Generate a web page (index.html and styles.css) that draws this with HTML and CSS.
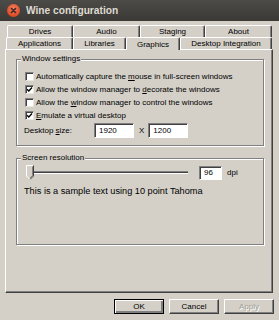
FILE: index.html
```html
<!DOCTYPE html>
<html lang="en">
<head>
    <meta charset="UTF-8">
    <title>Wine configuration</title>
    <link rel="stylesheet" href="styles.css">
</head>
<body>
    <div class="titlebar">
        <span class="close-button">
            <svg width="13" height="13" viewBox="0 0 13 13">
                <path d="M4.5 4.5 L8.5 8.5 M8.5 4.5 L4.5 8.5" stroke="#3c2a24" stroke-width="1.6" stroke-linecap="round"/>
            </svg>
        </span>
        <span class="title">Wine configuration</span>
    </div>

    <div class="frame">
        <!-- Tabs -->
        <div class="tab-row back-row">
            <div class="tab w-66">Drives</div>
            <div class="tab w-67">Audio</div>
            <div class="tab w-65">Staging</div>
            <div class="tab w-67">About</div>
        </div>
        <div class="tab-row front-row">
            <div class="tab w-67">Applications</div>
            <div class="tab w-53">Libraries</div>
            <div class="tab w-54 selected">Graphics</div>
            <div class="tab w-92">Desktop Integration</div>
        </div>

        <!-- Graphics page -->
        <div class="panel">
            <div class="group window-group">
                <div class="group-title">Window settings</div>
                <div class="check-row first">
                    <span class="checkbox"></span>
                    <span>Automatically capture the <u>m</u>ouse in full-screen windows</span>
                </div>
                <div class="check-row">
                    <span class="checkbox checked"></span>
                    <span>Allow the window manager to <u>d</u>ecorate the windows</span>
                </div>
                <div class="check-row">
                    <span class="checkbox"></span>
                    <span>Allow the <u>w</u>indow manager to control the windows</span>
                </div>
                <div class="check-row">
                    <span class="checkbox checked"></span>
                    <span><u>E</u>mulate a virtual desktop</span>
                </div>
                <div class="size-row">
                    <span class="size-label">Desktop <u>s</u>ize:</span>
                    <span class="field size-field">1920</span>
                    <span class="times">X</span>
                    <span class="field size-field">1200</span>
                </div>
            </div>

            <div class="group resolution-group">
                <div class="group-title">Screen resolution</div>
                <div class="slider-row">
                    <div class="slider">
                        <svg class="thumb" width="8" height="15" viewBox="0 0 8 15">
                            <polygon points="0.5,0.5 7.5,0.5 7.5,11 4,14.5 0.5,11" fill="#d4d0c8"/>
                            <polyline points="0.5,11 0.5,0.5 7,0.5" fill="none" stroke="#ffffff"/>
                            <polyline points="7.5,0.5 7.5,11 4,14.5" fill="none" stroke="#404040"/>
                            <polyline points="6.5,1.5 6.5,10.6 4,13" fill="none" stroke="#808080"/>
                            <line x1="0.5" y1="11" x2="4" y2="14.5" stroke="#ffffff"/>
                        </svg>
                    </div>
                    <span class="field dpi-field">96</span>
                    <span class="dpi">dpi</span>
                </div>
                <div class="sample">This is a sample text using 10 point Tahoma</div>
            </div>
        </div>

        <!-- Dialog buttons -->
        <div class="buttons">
            <button class="default">OK</button>
            <button>Cancel</button>
            <button disabled>Apply</button>
        </div>
    </div>
</body>
</html>
```

FILE: styles.css
```css
body {
    margin: 0;
    width: 279px;
    height: 320px;
    overflow: hidden;
    background-color: #d4d0c8;
    font-family: 'Liberation Sans', Arial, sans-serif;
    font-size: 8px;
    color: #000;
}
.titlebar {
    height: 21px;
    display: flex;
    align-items: center;
    padding-left: 7px;
    background: linear-gradient(#4c4b47, #3a3935);
}
.close-button {
    width: 13px;
    height: 13px;
    border-radius: 50%;
    background: radial-gradient(circle at 50% 35%, #f47e5e, #df4b25 70%, #b8391b);
    display: flex;
}
.title {
    margin-left: 6px;
    font-size: 10.2px;
    font-weight: bold;
    color: #dfdbd2;
}
.frame {
    display: flex;
    flex-direction: column;
    padding: 4px 0 0 5px;
}

/* Tabs */
.tab-row {
    display: flex;
    height: 12px;
}
.back-row {
    padding-left: 2px;
}
.front-row {
    padding-left: 1px;
}
.tab {
    box-sizing: border-box;
    height: 12px;
    border-top: 1px solid #fff;
    border-left: 1px solid #fff;
    border-right: 1px solid #404040;
    box-shadow: inset -1px 0 #808080;
    border-radius: 2px 2px 0 0;
    display: flex;
    align-items: center;
    justify-content: center;
    line-height: 9px;
    white-space: nowrap;
}
.tab.selected {
    position: relative;
    z-index: 1;
    height: 13px;
    margin-bottom: -1px;
    background-color: #d4d0c8;
}
.w-53 { width: 53px; }
.w-54 { width: 54px; }
.w-65 { width: 65px; }
.w-66 { width: 66px; }
.w-67 { width: 67px; }
.w-92 { width: 92px; }

/* Page */
.panel {
    box-sizing: border-box;
    width: 268px;
    height: 244px;
    border: 1px solid;
    border-color: #fff #404040 #404040 #fff;
    box-shadow: inset -1px -1px #808080;
    padding-top: 9px;
}
.group {
    border: 1px solid #808080;
    box-shadow: inset 1px 1px #fff, 1px 1px #fff;
    margin: 0 8px 0 10px;
}
.group-title {
    display: table;
    margin: -6px 0 0 4px;
    padding: 0 1px;
    line-height: 10px;
    background-color: #d4d0c8;
}
.window-group {
    padding-bottom: 7px;
}
.resolution-group {
    margin-top: 12px;
    height: 85px;
}
.check-row {
    display: flex;
    align-items: center;
    height: 13px;
    padding-left: 8px;
    white-space: nowrap;
}
.check-row.first {
    margin-top: 6px;
}
.checkbox {
    box-sizing: border-box;
    width: 9px;
    height: 9px;
    margin-right: 2px;
    background-color: #fff;
    border: 1px solid;
    border-color: #808080 #e8e6e0 #e8e6e0 #808080;
    box-shadow: inset 1px 1px #404040;
}
.checkbox.checked {
    background: #fff url("data:image/svg+xml,%3Csvg xmlns='http://www.w3.org/2000/svg' width='7' height='7'%3E%3Cpath d='M1 3.2 L2.8 5 L6 1.6' fill='none' stroke='%23000' stroke-width='1.4'/%3E%3C/svg%3E") no-repeat 0 0;
}
.size-row {
    display: flex;
    align-items: center;
    height: 15px;
    margin-top: 1px;
    padding-left: 7px;
}
.size-label {
    width: 70px;
}
.field {
    box-sizing: border-box;
    background-color: #fff;
    border: 1px solid;
    border-color: #808080 #fff #fff #808080;
    box-shadow: inset 1px 1px #404040;
    padding-left: 4px;
    display: flex;
    align-items: center;
}
.size-field {
    width: 40px;
    height: 15px;
}
.times {
    margin: 0 4px 0 5px;
}
.slider-row {
    display: flex;
    align-items: center;
    height: 15px;
    margin-top: 2px;
    padding-left: 9px;
}
.slider {
    width: 162px;
    height: 15px;
    display: flex;
    background: linear-gradient(transparent 6px, #808080 6px, #808080 7px, #404040 7px, #404040 8px, #fff 8px, #fff 9px, transparent 9px);
}
.thumb {
    display: block;
}
.dpi-field {
    width: 23px;
    height: 14px;
    margin-left: 11px;
}
.dpi {
    margin-left: 5px;
}
.sample {
    margin-top: 6px;
    padding-left: 7px;
    font-size: 9.2px;
    line-height: 10px;
}

/* Buttons */
.buttons {
    display: flex;
    justify-content: flex-end;
    gap: 5px;
    margin-top: 6px;
    padding-right: 5px;
}
button {
    box-sizing: border-box;
    width: 50px;
    height: 15px;
    padding: 0;
    font-family: 'Liberation Sans', Arial, sans-serif;
    font-size: 8px;
    color: #000;
    background-color: #d4d0c8;
    border: 1px solid;
    border-color: #fff #404040 #404040 #fff;
    box-shadow: inset -1px -1px #808080;
    border-radius: 0;
}
button.default {
    border-color: #000;
    box-shadow: inset 1px 1px #fff, inset -2px -2px #808080;
}
button:disabled {
    color: #a09c94;
    text-shadow: 1px 1px #fff;
}
```
